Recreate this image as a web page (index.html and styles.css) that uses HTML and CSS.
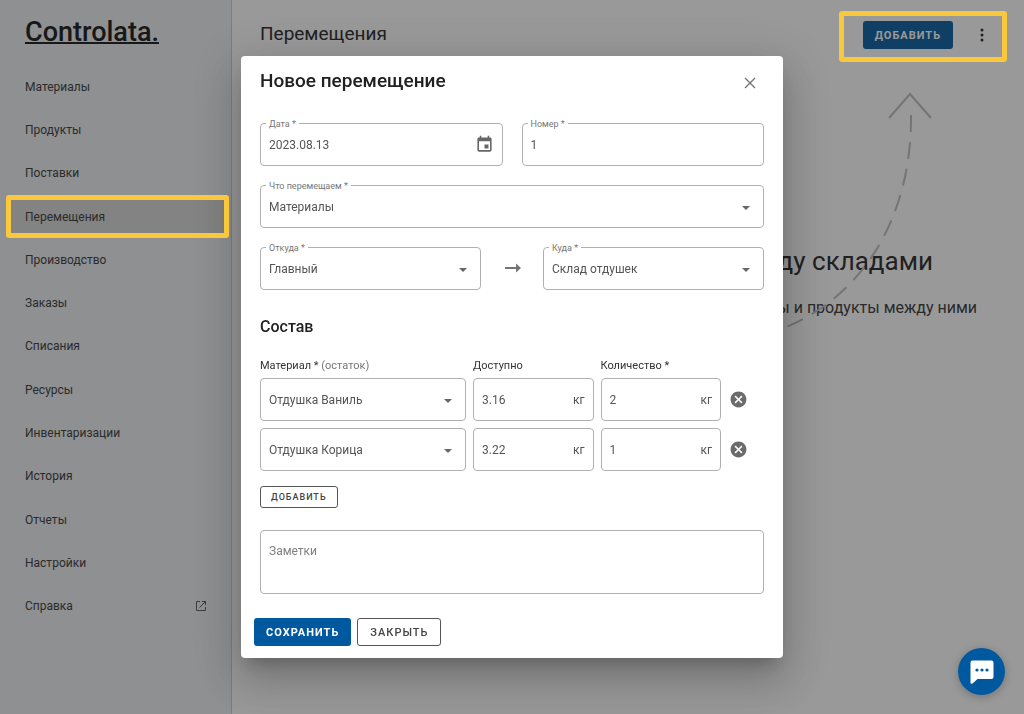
FILE: index.html
```html
<!DOCTYPE html>
<html lang="ru">
<head>
    <meta charset="UTF-8">
    <meta name="viewport" content="width=device-width, initial-scale=1.0">
    <title>Controlata</title>
    <link rel="stylesheet" href="styles.css">
</head>
<body>
    <div class="app">
        <aside class="sidebar">
            <a class="logo" href="#">Controlata.</a>
            <nav class="menu">
                <a class="menu-item" href="#">Материалы</a>
                <a class="menu-item" href="#">Продукты</a>
                <a class="menu-item" href="#">Поставки</a>
                <a class="menu-item active" href="#">Перемещения<span class="mark mark-menu"></span></a>
                <a class="menu-item" href="#">Производство</a>
                <a class="menu-item" href="#">Заказы</a>
                <a class="menu-item" href="#">Списания</a>
                <a class="menu-item" href="#">Ресурсы</a>
                <a class="menu-item" href="#">Инвентаризации</a>
                <a class="menu-item" href="#">История</a>
                <a class="menu-item" href="#">Отчеты</a>
                <a class="menu-item" href="#">Настройки</a>
                <a class="menu-item" href="#">Справка
                    <svg class="icon-open" viewBox="0 0 12 12" fill="none" stroke="currentColor"><path d="M5 1.5H1.5v9h9V7M7 1.5h3.5V5M10.5 1.5L4.5 7.5"/></svg>
                </a>
            </nav>
        </aside>

        <main class="main">
            <header class="topbar">
                <h1 class="page-title">Перемещения</h1>
                <div class="actions">
                    <button class="btn btn-primary" type="button">Добавить</button>
                    <button class="icon-btn" type="button" aria-label="Меню">
                        <svg width="20" height="20" viewBox="0 0 24 24" fill="currentColor"><circle cx="12" cy="6" r="1.800"/><circle cx="12" cy="12" r="1.800"/><circle cx="12" cy="18" r="1.800"/></svg>
                    </button>
                    <span class="mark mark-actions"></span>
                </div>
            </header>
            <section class="empty">
                <h2 class="empty-title">Создайте перемещение между складами</h2>
                <p class="empty-text">Добавьте склады и перемещайте материалы и продукты между ними</p>
            </section>
            <svg class="empty-arrow" viewBox="776 90 160 240" fill="none" stroke="currentColor" stroke-width="2">
                <path d="M889 118L910 94L931 118"/>
                <path d="M911 115C912 220 860 297 786 327" stroke-dasharray="17 10"/>
            </svg>
        </main>
    </div>

    <div class="overlay">
        <form class="dialog" role="dialog" aria-labelledby="dialog-title">
            <div class="dialog-head">
                <h2 class="dialog-title" id="dialog-title">Новое перемещение</h2>
                <button class="icon-btn close" type="button" aria-label="Закрыть">
                    <svg width="12" height="12" viewBox="0 0 12 12" stroke="currentColor" stroke-width="1.4"><path d="M1 1l10 10M11 1L1 11"/></svg>
                </button>
            </div>

            <div class="fields">
                <div class="row">
                    <div class="field">
                        <label for="date">Дата *</label>
                        <input id="date" type="text" value="2023.08.13">
                        <svg class="icon-date" viewBox="0 0 24 24" fill="currentColor"><path d="M19 3h-1V1h-2v2H8V1H6v2H5c-1.11 0-1.99.9-1.99 2L3 19c0 1.1.89 2 2 2h14c1.1 0 2-.9 2-2V5c0-1.1-.9-2-2-2zm0 16H5V8h14v11zM17 12h-5v5h5v-5z"/></svg>
                    </div>
                    <div class="field">
                        <label for="number">Номер *</label>
                        <input id="number" type="text" value="1">
                    </div>
                </div>
                <div class="row">
                    <div class="field">
                        <label for="kind">Что перемещаем *</label>
                        <select id="kind"><option>Материалы</option></select>
                        <span class="caret"></span>
                    </div>
                </div>
                <div class="row">
                    <div class="field">
                        <label for="from">Откуда *</label>
                        <select id="from"><option>Главный</option></select>
                        <span class="caret"></span>
                    </div>
                    <svg class="icon-arrow" viewBox="0 0 24 24" fill="currentColor"><path d="M5 10H16V6.500L21 11l-5 4.500V12H5z"/></svg>
                    <div class="field">
                        <label for="to">Куда *</label>
                        <select id="to"><option>Склад отдушек</option></select>
                        <span class="caret"></span>
                    </div>
                </div>
            </div>

            <h3 class="subtitle">Состав</h3>
            <div class="items">
                <div class="col-name">Материал * <span class="muted">(остаток)</span></div>
                <div class="col-name">Доступно</div>
                <div class="col-name">Количество *</div>
                <div></div>

                <div class="field">
                    <select aria-label="Материал"><option>Отдушка Ваниль</option></select>
                    <span class="caret"></span>
                </div>
                <div class="field">
                    <input type="text" value="3.16" aria-label="Доступно" readonly>
                    <span class="unit">кг</span>
                </div>
                <div class="field">
                    <input type="text" value="2" aria-label="Количество">
                    <span class="unit">кг</span>
                </div>
                <button class="icon-btn remove" type="button" aria-label="Удалить">
                    <svg width="19" height="19" viewBox="0 0 24 24" fill="currentColor"><path d="M12,2C17.53,2 22,6.47 22,12C22,17.53 17.53,22 12,22C6.47,22 2,17.53 2,12C2,6.47 6.47,2 12,2M15.59,7L12,10.59L8.41,7L7,8.41L10.59,12L7,15.59L8.41,17L12,13.41L15.59,17L17,15.59L13.41,12L17,8.41L15.59,7Z"/></svg>
                </button>

                <div class="field">
                    <select aria-label="Материал"><option>Отдушка Корица</option></select>
                    <span class="caret"></span>
                </div>
                <div class="field">
                    <input type="text" value="3.22" aria-label="Доступно" readonly>
                    <span class="unit">кг</span>
                </div>
                <div class="field">
                    <input type="text" value="1" aria-label="Количество">
                    <span class="unit">кг</span>
                </div>
                <button class="icon-btn remove" type="button" aria-label="Удалить">
                    <svg width="19" height="19" viewBox="0 0 24 24" fill="currentColor"><path d="M12,2C17.53,2 22,6.47 22,12C22,17.53 17.53,22 12,22C6.47,22 2,17.53 2,12C2,6.47 6.47,2 12,2M15.59,7L12,10.59L8.41,7L7,8.41L10.59,12L7,15.59L8.41,17L12,13.41L15.59,17L17,15.59L13.41,12L17,8.41L15.59,7Z"/></svg>
                </button>
            </div>
            <button class="btn btn-outline btn-small" type="button">Добавить</button>

            <textarea class="notes" placeholder="Заметки" aria-label="Заметки"></textarea>

            <div class="dialog-actions">
                <button class="btn btn-primary" type="submit">Сохранить</button>
                <button class="btn btn-outline" type="button">Закрыть</button>
            </div>
        </form>
    </div>

    <button class="chat" type="button" aria-label="Чат">
        <svg width="24" height="24" viewBox="0 0 24 24"><path d="M2.500 0.500h19a2 2 0 0 1 2 2v14.500a2 2 0 0 1-2 2H7.500L2.500 23.500Q0.500 24.500 0.500 22.500V2.500a2 2 0 0 1 2-2z" fill="#fff"/><g fill="#00599f"><circle cx="7" cy="10" r="1.600"/><circle cx="12" cy="10" r="1.600"/><circle cx="17" cy="10" r="1.600"/></g></svg>
    </button>
</body>
</html>
```

FILE: styles.css
```css
* {
    box-sizing: border-box;
}
body {
    margin: 0;
    font-family: Roboto, "Liberation Sans", sans-serif;
    font-size: 12px;
    color: #212121;
    background: #fff;
}
h1, h2, h3, p {
    margin: 0;
}
button, input, select, textarea {
    font: inherit;
    color: inherit;
}
.app {
    display: flex;
    min-height: 100vh;
}

/* sidebar */
.sidebar {
    width: 232px;
    flex-shrink: 0;
    background: #ebeef0;
    border-right: 1px solid #ccc;
}
.logo {
    display: flex;
    align-items: center;
    height: 65px;
    padding: 0 0 1px 25px;
    font-size: 27px;
    font-weight: 500;
    color: #111;
    text-decoration: underline;
    text-decoration-thickness: 2px;
}
.menu {
    display: grid;
    grid-auto-rows: 1fr;
    height: 563px;
    padding: 0 7px 0 8px;
}
.menu-item {
    position: relative;
    display: flex;
    align-items: center;
    justify-content: space-between;
    padding: 0 17px;
    color: #333;
    text-decoration: none;
}
.menu-item.active {
    background: #d5d7d4;
}
.icon-open {
    width: 12px;
    height: 12px;
    color: #555;
}

/* main area */
.main {
    position: relative;
    flex: 1;
}
.topbar {
    display: flex;
    align-items: center;
    justify-content: space-between;
    height: 70px;
    padding: 0 32px 0 28px;
}
.page-title {
    font-size: 19px;
    line-height: 24px;
    padding-bottom: 2px;
    font-weight: 400;
}
.actions {
    position: relative;
    display: flex;
    align-items: center;
    gap: 19px;
}
.empty {
    padding: 173px 47px 0 0;
    text-align: right;
    white-space: nowrap;
}
.empty-title {
    padding-right: 44px;
    font-size: 26px;
    line-height: 36px;
    font-weight: 400;
}
.empty-text {
    margin-top: 17px;
    font-size: 16px;
    line-height: 24px;
    color: #333;
}
.empty-arrow {
    position: absolute;
    top: 90px;
    right: 88px;
    width: 160px;
    height: 240px;
    color: #bbb;
}

/* yellow frames */
.mark {
    position: absolute;
    z-index: 20;
    border: 5px solid #fac83c;
    border-radius: 3px;
    pointer-events: none;
}
.mark-menu {
    inset: 0 -5px 0 -2px;
}
.mark-actions {
    inset: -10px -15px -13px -24px;
}

/* buttons */
.btn {
    height: 28px;
    padding: 0 12px;
    border: 0;
    border-radius: 3px;
    font-size: 11px;
    font-weight: 500;
    letter-spacing: 1px;
    text-transform: uppercase;
}
.btn-primary {
    background: #00599f;
    color: #fff;
    font-weight: 700;
}
.btn-outline {
    background: #fff;
    border: 1px solid #555;
    color: #444;
}
.btn-small {
    height: 22px;
    padding: 0 10px;
    font-size: 9px;
    align-self: flex-start;
}
.icon-btn {
    display: flex;
    padding: 0;
    border: 0;
    background: none;
}

/* dialog */
.overlay {
    position: fixed;
    inset: 0;
    z-index: 10;
    display: flex;
    align-items: center;
    justify-content: center;
    background: rgba(33, 33, 33, .46);
}
.dialog {
    display: flex;
    flex-direction: column;
    width: 100%;
    max-width: 542px;
    padding: 0 19px 12px;
    background: #fff;
    border-radius: 4px;
    box-shadow: 0 11px 15px -7px rgba(0, 0, 0, .2), 0 24px 38px 3px rgba(0, 0, 0, .14), 0 9px 46px 8px rgba(0, 0, 0, .12);
}
.dialog-head {
    display: flex;
    align-items: center;
    justify-content: space-between;
    height: 50px;
    margin-bottom: 17px;
}
.dialog-title {
    font-size: 19px;
    line-height: 24px;
    font-weight: 500;
}
.close {
    padding: 10px 8px 6px;
    color: #757575;
}
.fields {
    display: flex;
    flex-direction: column;
    gap: 19px;
}
.row {
    display: flex;
    align-items: center;
    gap: 19px;
}
.field {
    position: relative;
    display: flex;
    align-items: center;
    flex: 1;
    min-width: 0;
    height: 43px;
    padding: 0 8px;
    border: 1px solid #b0b0b0;
    border-radius: 4px;
    color: #555;
}
.field label {
    position: absolute;
    top: -6px;
    left: 5px;
    padding: 0 3px;
    background: #fff;
    font-size: 9px;
    line-height: 12px;
    color: #777;
}
.field input,
.field select {
    flex: 1;
    min-width: 0;
    padding: 0;
    border: 0;
    outline: 0;
    background: none;
    appearance: none;
}
.caret {
    margin: 2px 5px 0 0;
    border: 4px solid transparent;
    border-top-color: #666;
    border-bottom: 0;
}
.icon-date {
    width: 19px;
    height: 19px;
    color: #666;
}
.icon-arrow {
    width: 24px;
    height: 24px;
    color: #757575;
}
.subtitle {
    margin: 25px 0 19px;
    font-size: 16px;
    line-height: 24px;
    font-weight: 500;
}
.items {
    display: grid;
    grid-template-columns: 206px 1fr 1fr 36px;
    gap: 7px;
}
.col-name {
    margin-bottom: -3px;
    font-size: 11px;
    line-height: 16px;
    color: #333;
}
.muted {
    color: #777;
}
.remove {
    align-items: center;
    padding-left: 1px;
    color: #6b6b6b;
}
.items + .btn {
    margin-top: 15px;
}
.notes {
    height: 64px;
    margin-top: 22px;
    padding: 13px 8px;
    border: 1px solid #b0b0b0;
    border-radius: 4px;
    outline: 0;
    resize: none;
}
.notes::placeholder {
    color: #808080;
}
.dialog-actions {
    display: flex;
    gap: 6px;
    margin: 24px 0 0 -6px;
}

/* chat */
.chat {
    position: fixed;
    right: 19px;
    bottom: 19px;
    z-index: 20;
    display: flex;
    align-items: center;
    justify-content: center;
    width: 47px;
    height: 47px;
    padding: 0;
    border: 0;
    border-radius: 50%;
    background: #00599f;
    box-shadow: 0 2px 8px rgba(0, 0, 0, .25);
}
```
